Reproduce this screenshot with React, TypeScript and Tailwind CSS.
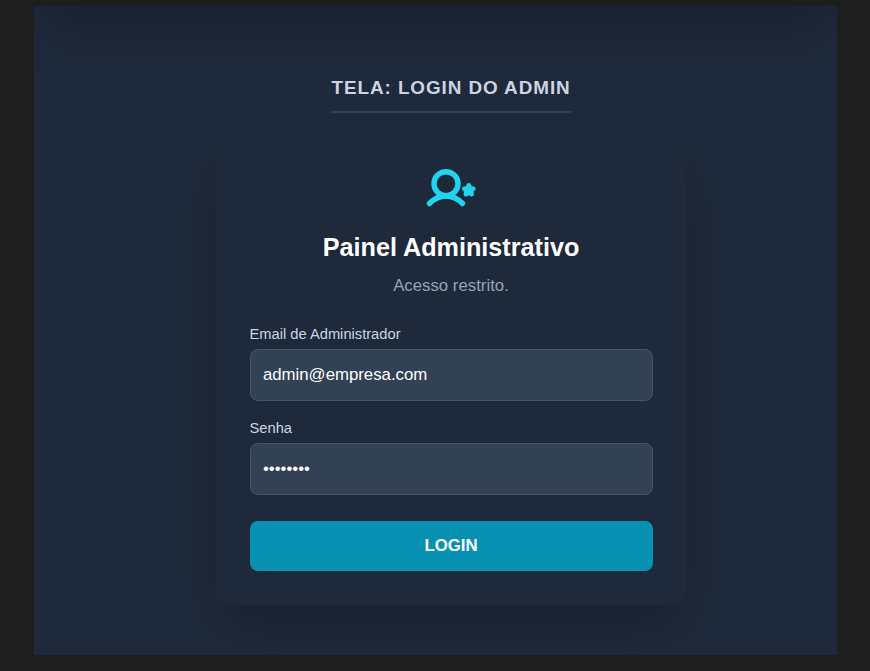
function AdminIcon() {
  return (
    <svg className="mr-[1px] block h-[50px] w-[54px]" viewBox="0 0 54 50" fill="none" stroke="#22d3ee" strokeWidth="5.4" strokeLinecap="round" strokeLinejoin="round">
      <circle cx="22" cy="21.700" r="12" />
      <path d="M5.500 41.500C15.200 31.500 28.800 31.500 38.500 41.500" />
      <path d="M44.800 23.400L46.200 26.300L49.400 26.700L47.100 28.900L47.700 32.100L44.800 30.600L41.900 32.100L42.500 28.900L40.200 26.700L43.400 26.300Z" fill="#22d3ee" strokeWidth="4.600" />
    </svg>
  );
}

function Field({ label, type, value }: { label: string; type: string; value: string }) {
  return (
    <label className="block">
      <span className="-ml-[0.5px] block h-[21px] text-[14.7px] leading-[21px] text-[#cbd5e1]">{label}</span>
      <input
        type={type}
        defaultValue={value}
        className="mt-[4px] block h-[52px] w-full rounded-[8px] border border-[#475569] bg-[#334155] px-[11.900px] text-[16.8px] leading-[20px] pb-[1px] text-white outline-none"
      />
    </label>
  );
}

export default function App() {
  return (
    <div className="h-[671px] w-[870px] overflow-hidden bg-[#1e1e1e] pl-[34px] pt-[6px] font-['Liberation_Sans',Arial,sans-serif]">
      <main className="flow-root h-[649px] w-[803px] overflow-hidden bg-[#1e293b]">
        <div className="-mt-[200px] h-[200px] w-full shadow-[0_26px_52px_-13px_rgba(0,0,0,0.25)]" />
        <div className="flex flex-col items-center pl-[181px] pr-[151px] pt-[68px]">
          <h1 className="h-[39px] w-[240px] whitespace-nowrap border-b-2 border-[#334155] pl-[1px] text-center text-[18.9px] font-semibold leading-[28px] tracking-[0.92px] text-[#cbd5e1]">
            TELA: LOGIN DO ADMIN
          </h1>
          <section className="ml-[1px] mt-[22px] h-[470px] w-[470px] rounded-[12.6px] bg-[#1e293b] pl-[34px] pr-[33px] pt-[27px] shadow-[0_26px_52px_-13px_rgba(0,0,0,0.25)]">
            <div className="flex justify-center">
              <AdminIcon />
            </div>
            <h2 className="mt-[18px] pr-[1px] text-center text-[25.2px] font-bold leading-[34px] text-white">Painel Administrativo</h2>
            <p className="mt-[9px] pr-[1px] text-center text-[16.8px] leading-[25px] text-[#94a3b8]">Acesso restrito.</p>
            <form className="mt-[26px] flex flex-col">
              <Field label="Email de Administrador" type="text" value="admin@empresa.com" />
              <div className="mt-[17px]">
                <Field label="Senha" type="password" value="password" />
              </div>
              <button type="button" className="mt-[26px] h-[50px] rounded-[8px] bg-[#0891b2] pr-[1px] text-[16.8px] font-semibold text-white">
                LOGIN
              </button>
            </form>
          </section>
        </div>
      </main>
    </div>
  );
}
